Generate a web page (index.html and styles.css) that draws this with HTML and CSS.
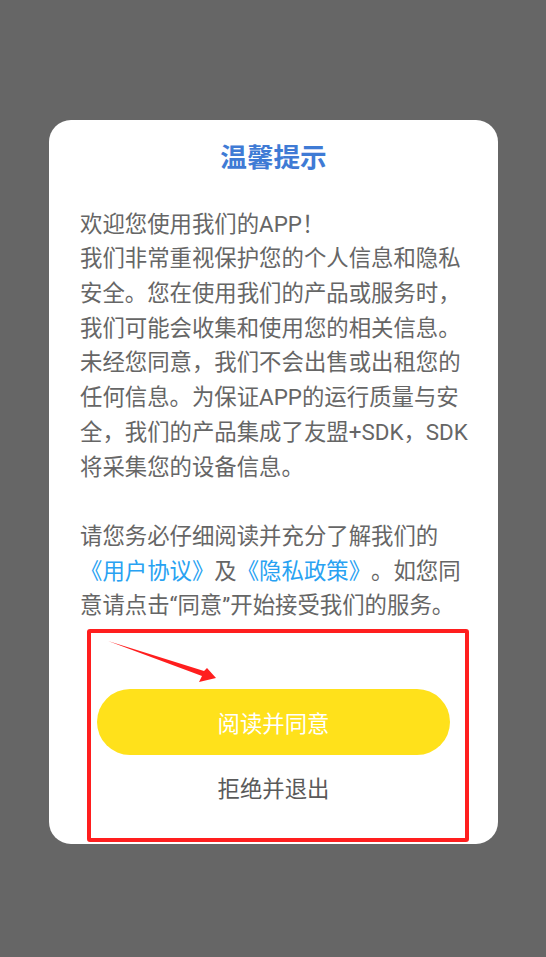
FILE: index.html
```html
<!DOCTYPE html>
<html lang="zh-CN">
<head>
<meta charset="utf-8">
<title>温馨提示</title>
<link rel="stylesheet" href="styles.css">
</head>
<body>
<div class="screen">
  <div class="dialog">
    <h1 class="title">温馨提示</h1>
    <div class="content">
      <p class="para">欢迎您使用我们的APP！<br>我们非常重视保护您的个人信息和隐私安全。您在使用我们的产品或服务时，我们可能会收集和使用您的相关信息。未经您同意，我们不会出售或出租您的任何信息。为保证APP的运行质量与安全，我们的产品集成了友盟+SDK，SDK将采集您的设备信息。</p>
      <p class="para para-gap">请您务必仔细阅读并充分了解我们的<span class="link">《用户协议》</span>及<span class="link">《隐私政策》</span>。如您同意请点击“同意”开始接受我们的服务。</p>
    </div>
    <div class="actions">
      <button class="btn-agree" type="button">阅读并同意</button>
      <button class="btn-reject" type="button">拒绝并退出</button>
    </div>
    <div class="mark-box"></div>
    <svg class="mark-arrow" width="120" height="50" viewBox="0 0 120 50" aria-hidden="true">
      <polygon points="0,0 96,30 99,27 108,37 91,41 94,35" fill="#ff1e1e"/>
    </svg>
  </div>
</div>
</body>
</html>
```

FILE: styles.css
```css
html, body {
  margin: 0;
  padding: 0;
}

body {
  background: #666666;
  font-family: Roboto, "Noto Sans CJK SC", sans-serif;
  text-spacing-trim: space-all;
}

.screen {
  width: 546px;
  height: 957px;
  box-sizing: border-box;
  padding: 120px 0 0 49px;
}

.dialog {
  position: relative;
  width: 449px;
  height: 724px;
  box-sizing: border-box;
  background: #ffffff;
  border-radius: 22px;
  padding: 19px 0 37px;
  display: flex;
  flex-direction: column;
}

.title {
  margin: 0;
  font-size: 26.6px;
  line-height: 38px;
  font-weight: 700;
  color: #3f7bd5;
  text-align: center;
}

.content {
  margin-top: 29.6px;
  padding: 0 26px 0 31px;
  font-size: 22.4px;
  line-height: 34.7px;
  color: #666666;
}

.para {
  margin: 0;
}

.para-gap {
  margin-top: 34.7px;
}

.link {
  color: #28a2f2;
}

.actions {
  display: flex;
  flex-direction: column;
  margin-top: 66px;
}

.btn-agree {
  margin: 0 48px;
  height: 66px;
  border: none;
  border-radius: 33px;
  background: #ffe11b;
  color: #ffffff;
  font-family: inherit;
  font-size: 22.4px;
  padding: 0;
}

.btn-reject {
  margin-top: 16px;
  height: 36px;
  border: none;
  background: transparent;
  color: #5a5a5a;
  font-family: inherit;
  font-size: 22.4px;
  line-height: 36px;
  padding: 0;
}

.mark-box {
  position: absolute;
  left: 38px;
  top: 509px;
  width: 382px;
  height: 213px;
  box-sizing: border-box;
  border: 4px solid #ff1e1e;
  border-radius: 3px;
}

.mark-arrow {
  position: absolute;
  left: 59px;
  top: 521px;
}
```
